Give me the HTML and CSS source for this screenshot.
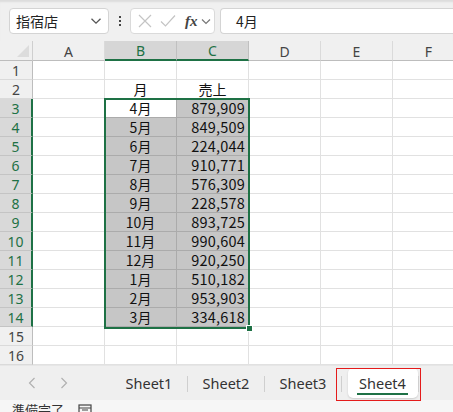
FILE: index.html
```html
<!DOCTYPE html>
<html lang="ja">
<head>
<meta charset="utf-8">
<link rel="stylesheet" href="styles.css">
</head>
<body>
<div class="app">
  <div class="fbar">
    <div class="namebox">
      <span class="nb-text">指宿店</span>
      <svg class="chev" width="12" height="8" viewBox="0 0 12 8"><path d="M1.5 1.8 L6 6.2 L10.5 1.8" fill="none" stroke="#555" stroke-width="1.3"/></svg>
    </div>
    <div class="kebab"><i></i><i></i><i></i></div>
    <div class="fbtns">
      <svg width="14" height="14" viewBox="0 0 14 14"><path d="M1 1 L13 13 M13 1 L1 13" stroke="#c4c4c4" stroke-width="1.2" fill="none"/></svg>
      <svg width="16" height="14" viewBox="0 0 16 14"><path d="M1 7.5 L5.5 12 L15 1.5" stroke="#c4c4c4" stroke-width="1.2" fill="none"/></svg>
      <span class="fx">fx</span>
      <svg width="10" height="7" viewBox="0 0 10 7"><path d="M1 1.5 L5 5.5 L9 1.5" fill="none" stroke="#777" stroke-width="1.2"/></svg>
    </div>
    <div class="finput">4月</div>
  </div>

  <div class="sheet">
    <div class="grid">
      <div class="corner"><svg width="12" height="12" viewBox="0 0 12 12"><path d="M12 0 L12 12 L0 12 Z" fill="#dcdcdc"/></svg></div>
      <div class="ch">A</div><div class="ch on">B</div><div class="ch on">C</div><div class="ch">D</div><div class="ch">E</div><div class="ch">F</div>

      <div class="rh">1</div><div class="c"></div><div class="c"></div><div class="c"></div><div class="c"></div><div class="c"></div><div class="c"></div>
      <div class="rh">2</div><div class="c"></div><div class="c ctr">月</div><div class="c ctr">売上</div><div class="c"></div><div class="c"></div><div class="c"></div>
      <div class="rh on">3</div><div class="c"></div><div class="c ctr act">4月</div><div class="c num sel">879,909</div><div class="c"></div><div class="c"></div><div class="c"></div>
      <div class="rh on">4</div><div class="c"></div><div class="c ctr sel">5月</div><div class="c num sel">849,509</div><div class="c"></div><div class="c"></div><div class="c"></div>
      <div class="rh on">5</div><div class="c"></div><div class="c ctr sel">6月</div><div class="c num sel">224,044</div><div class="c"></div><div class="c"></div><div class="c"></div>
      <div class="rh on">6</div><div class="c"></div><div class="c ctr sel">7月</div><div class="c num sel">910,771</div><div class="c"></div><div class="c"></div><div class="c"></div>
      <div class="rh on">7</div><div class="c"></div><div class="c ctr sel">8月</div><div class="c num sel">576,309</div><div class="c"></div><div class="c"></div><div class="c"></div>
      <div class="rh on">8</div><div class="c"></div><div class="c ctr sel">9月</div><div class="c num sel">228,578</div><div class="c"></div><div class="c"></div><div class="c"></div>
      <div class="rh on">9</div><div class="c"></div><div class="c ctr sel">10月</div><div class="c num sel">893,725</div><div class="c"></div><div class="c"></div><div class="c"></div>
      <div class="rh on">10</div><div class="c"></div><div class="c ctr sel">11月</div><div class="c num sel">990,604</div><div class="c"></div><div class="c"></div><div class="c"></div>
      <div class="rh on">11</div><div class="c"></div><div class="c ctr sel">12月</div><div class="c num sel">920,250</div><div class="c"></div><div class="c"></div><div class="c"></div>
      <div class="rh on">12</div><div class="c"></div><div class="c ctr sel">1月</div><div class="c num sel">510,182</div><div class="c"></div><div class="c"></div><div class="c"></div>
      <div class="rh on">13</div><div class="c"></div><div class="c ctr sel">2月</div><div class="c num sel">953,903</div><div class="c"></div><div class="c"></div><div class="c"></div>
      <div class="rh on">14</div><div class="c"></div><div class="c ctr sel">3月</div><div class="c num sel">334,618</div><div class="c"></div><div class="c"></div><div class="c"></div>
      <div class="rh">15</div><div class="c"></div><div class="c"></div><div class="c"></div><div class="c"></div><div class="c"></div><div class="c"></div>
      <div class="rh">16</div><div class="c"></div><div class="c"></div><div class="c"></div><div class="c"></div><div class="c"></div><div class="c"></div>
    </div>
    <div class="selection"><span class="handle"></span></div>
  </div>

  <div class="tabbar">
    <div class="nav">
      <svg width="8" height="12" viewBox="0 0 8 12"><path d="M6.5 1 L1.5 6 L6.5 11" fill="none" stroke="#b0b0b0" stroke-width="1.2"/></svg>
      <svg width="8" height="12" viewBox="0 0 8 12"><path d="M1.5 1 L6.5 6 L1.5 11" fill="none" stroke="#b0b0b0" stroke-width="1.2"/></svg>
    </div>
    <div class="tabs">
      <div class="tab">Sheet1</div>
      <div class="tab">Sheet2</div>
      <div class="tab">Sheet3</div>
      <div class="tab active"><span class="tab-card"><span class="tab-label">Sheet4</span></span></div>
    </div>
    <div class="mark"></div>
  </div>

  <div class="status">
    <span>準備完了</span>
    <svg width="14" height="12" viewBox="0 0 14 12"><rect x="1" y="1" width="12" height="10" fill="none" stroke="#444" stroke-width="1.2"/><path d="M1 4 H13 M4 6 H10" stroke="#444" stroke-width="1.2"/></svg>
  </div>
</div>
</body>
</html>
```

FILE: styles.css
```css
* { box-sizing: border-box; }
html, body { margin: 0; padding: 0; }
body {
  width: 453px;
  height: 412px;
  overflow: hidden;
  background: #f0f0f0;
  font-family: "Noto Sans CJK JP", "Noto Sans", sans-serif;
  color: #222;
}
.app { display: flex; flex-direction: column; width: 453px; height: 412px; }

/* formula bar */
.fbar {
  height: 41px;
  flex: none;
  display: flex;
  align-items: center;
  padding: 1px 0 0 9px;
  background: #f0f0f0;
  box-shadow: inset 0 3px 2px -1px #dcdcdc;
}
.namebox {
  width: 100px;
  height: 26px;
  background: #fff;
  border: 1px solid #d4d4d4;
  border-radius: 4px;
  display: flex;
  align-items: center;
  justify-content: space-between;
  padding: 0 6px 0 6px;
  font-size: 14px;
  color: #222;
}
.nb-text { line-height: 1; }
.kebab {
  width: 21px;
  display: flex;
  flex-direction: column;
  align-items: center;
  gap: 2px;
}
.kebab i { display: block; width: 2px; height: 2px; background: #444; }
.fbtns {
  width: 85px;
  height: 26px;
  background: #fff;
  border: 1px solid #dadada;
  border-radius: 4px;
  display: flex;
  align-items: center;
  padding: 0 0 0 7px;
}
.fbtns svg:nth-child(1) { margin-right: 8px; }
.fbtns svg:nth-child(2) { margin-right: 9px; }
.fx {
  font-family: "Liberation Serif", serif;
  font-style: italic;
  font-weight: bold;
  font-size: 15px;
  color: #444;
  margin-right: 3px;
  line-height: 1;
}
.finput {
  margin-left: 5px;
  flex: 1;
  height: 26px;
  background: #fff;
  border: 1px solid #d4d4d4;
  border-right: none;
  border-radius: 4px 0 0 4px;
  padding-left: 15px;
  font-size: 14px;
  display: flex;
  align-items: center;
}

/* sheet */
.sheet { position: relative; height: 324px; flex: none; overflow: hidden; background: #fff; }
.grid {
  display: grid;
  grid-template-columns: 33px repeat(6, 72px);
  grid-template-rows: 20px repeat(16, 19px);
  width: 465px;
  font-size: 14px;
}
.corner {
  background: #f0f0f0;
  border-right: 1px solid #cfcfcf;
  border-bottom: 1px solid #bdbdbd;
  display: flex;
  align-items: flex-end;
  justify-content: flex-end;
  padding: 0 3px 3px 0;
}
.ch {
  background: #f0f0f0;
  border-right: 1px solid #dadada;
  border-bottom: 1px solid #bdbdbd;
  color: #444;
  display: flex;
  align-items: center;
  justify-content: center;
  font-family: "Noto Sans", sans-serif;
  font-size: 14px;
  padding-top: 1px;
}
.ch.on { background: #d6d6d6; color: #1e7145; border-bottom: 2px solid #1e7145; border-right-color: #c0c0c0; }
.rh {
  background: #f0f0f0;
  border-right: 1px solid #bdbdbd;
  border-bottom: 1px solid #dadada;
  color: #444;
  display: flex;
  align-items: center;
  justify-content: center;
  font-family: "Noto Sans", sans-serif;
  font-size: 14px;
}
.rh.on { background: #d9d9d9; color: #1e7145; border-right: 2px solid #1e7145; border-bottom-color: #c4c4c4; }
.c {
  border-right: 1px solid #e1e1e1;
  border-bottom: 1px solid #e1e1e1;
  display: flex;
  align-items: center;
  line-height: 1;
  color: #111;
}
.ctr { justify-content: center; }
.num { justify-content: flex-end; padding-right: 3px; font-size: 14.5px; letter-spacing: 0.2px; }
.sel { background: #c6c6c6; border-color: #ababab; }
.act { background: #fff; border-color: #ababab; }

.selection {
  position: absolute;
  left: 104px;
  top: 57px;
  width: 146px;
  height: 231px;
  border: 2px solid #1e7145;
  pointer-events: none;
}
.handle {
  position: absolute;
  right: -5px;
  bottom: -5px;
  width: 7px;
  height: 7px;
  background: #1e7145;
  border: 1px solid #fff;
}

/* tab bar */
.tabbar {
  position: relative;
  height: 35px;
  flex: none;
  display: flex;
  align-items: center;
  background: #efefef;
  border-top: 1px solid #e6e6e6;
}
.nav {
  width: 111px;
  display: flex;
  align-items: center;
  gap: 24px;
  padding-left: 28px;
}
.tabs { display: flex; align-items: center; height: 100%; }
.tab {
  width: 77px;
  height: 100%;
  display: flex;
  align-items: center;
  justify-content: center;
  font-family: "Noto Sans", sans-serif;
  font-size: 14.5px;
  color: #333;
  border-right: 1px solid transparent;
  position: relative;
}
.tab::after {
  content: "";
  position: absolute;
  right: -1px;
  top: 10px;
  width: 1px;
  height: 16px;
  background: #cfcfcf;
}
.tab.active { align-items: flex-start; padding-top: 2px; }
.tab-card {
  width: 70px;
  height: 30px;
  background: #fff;
  border-radius: 5px;
  box-shadow: 0 1px 2px rgba(0,0,0,0.15);
  display: flex;
  align-items: center;
  justify-content: center;
  margin-left: 5px;
}
.tab-label {
  border-bottom: 2px solid #1e7145;
  line-height: 20px;
  padding: 0 2px;
  margin-top: 1px;
  color: #333;
}
.mark {
  position: absolute;
  left: 336px;
  top: 2px;
  width: 85px;
  height: 33px;
  border: 1.5px solid #e41b1b;
  pointer-events: none;
}

/* status */
.status {
  flex: 1;
  background: #f6f6f6;
  display: flex;
  align-items: flex-start;
  gap: 14px;
  padding: 3px 0 0 12px;
  font-size: 13px;
  color: #333;
  line-height: 1;
}
.status svg { margin-top: 1px; }
```
